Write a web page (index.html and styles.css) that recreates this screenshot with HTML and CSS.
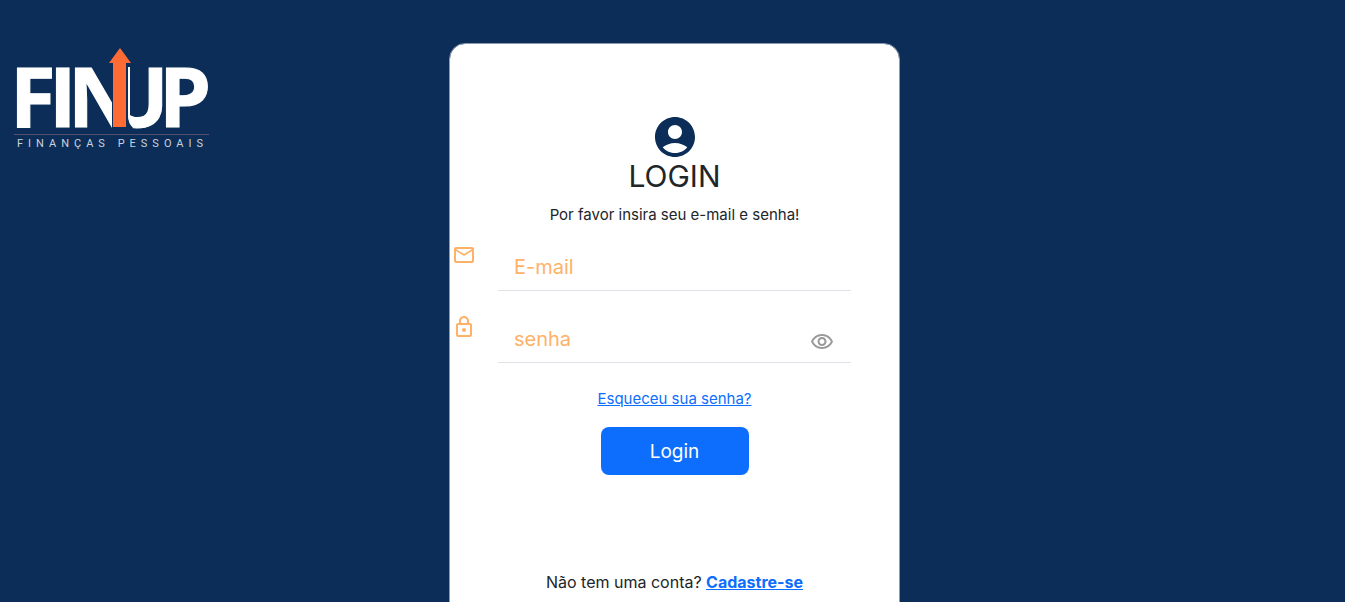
FILE: index.html
```html
<!DOCTYPE html>
<html lang="pt-BR">
<head>
<meta charset="utf-8">
<meta name="viewport" content="width=device-width, initial-scale=1">
<title>Finup - Login</title>
<link rel="stylesheet" href="styles.css">
</head>
<body>
<div class="page">
  <header class="brand">
    <svg class="brand-logo" viewBox="0 0 208 108" role="img" aria-label="Finup Finanças Pessoais">
      <text class="brand-name" x="-3 36 55 93 146" y="83">FINUP</text>
      <path class="brand-gap" d="M99 22h16v50q0 7 5 12l-2 1H99z"/>
      <path class="brand-edge" d="M115 23h2v48l2 10q-4-4-4-11z"/>
      <path class="brand-arrow" d="M107 4l11 15h-5v64h-13V19h-4z"/>
      <path class="brand-rule" d="M1 90.500h195"/>
      <text class="brand-tagline" x="4" y="103">FINANÇAS PESSOAIS</text>
    </svg>
  </header>
  <main class="card">
    <form class="login">
      <svg class="avatar" viewBox="0 0 24 24" aria-hidden="true"><path d="M12 2C6.480 2 2 6.480 2 12s4.480 10 10 10 10-4.480 10-10S17.520 2 12 2zm0 4c1.930 0 3.500 1.570 3.500 3.500S13.930 13 12 13s-3.500-1.570-3.500-3.500S10.070 6 12 6zm0 14c-2.030 0-4.430-.820-6.140-2.880C7.550 15.800 9.680 15 12 15s4.450.800 6.140 2.120C16.430 19.180 14.030 20 12 20z"/></svg>
      <h1 class="title">LOGIN</h1>
      <p class="intro">Por favor insira seu e-mail e senha!</p>
      <div class="field">
        <label class="field-icon" for="email" aria-label="E-mail">
          <svg viewBox="0 0 24 24" aria-hidden="true"><path d="M22 6c0-1.100-.900-2-2-2H4c-1.100 0-2 .900-2 2v12c0 1.100.900 2 2 2h16c1.100 0 2-.900 2-2V6zm-2 0l-8 5-8-5h16zm0 12H4V8l8 5 8-5v10z"/></svg>
        </label>
        <input class="field-input" id="email" type="email" placeholder="E-mail">
      </div>
      <div class="field">
        <label class="field-icon" for="senha" aria-label="senha">
          <svg viewBox="0 0 24 24" aria-hidden="true"><path d="M18 8h-1V6c0-2.760-2.240-5-5-5S7 3.240 7 6v2H6c-1.100 0-2 .900-2 2v10c0 1.100.900 2 2 2h12c1.100 0 2-.900 2-2V10c0-1.100-.900-2-2-2zM9 6c0-1.660 1.340-3 3-3s3 1.340 3 3v2H9V6zm9 14H6V10h12v10zm-6-3c1.100 0 2-.900 2-2s-.900-2-2-2-2 .900-2 2 .900 2 2 2z"/></svg>
        </label>
        <input class="field-input" id="senha" type="password" placeholder="senha">
        <button class="reveal" type="button" aria-label="Mostrar senha">
          <svg viewBox="0 0 24 24" aria-hidden="true"><path d="M12 6c3.790 0 7.170 2.130 8.820 5.500C19.170 14.870 15.790 17 12 17s-7.170-2.130-8.820-5.500C4.830 8.130 8.210 6 12 6m0-2C7 4 2.730 7.110 1 11.500 2.730 15.890 7 19 12 19s9.270-3.110 11-7.500C21.270 7.110 17 4 12 4zm0 5c1.380 0 2.500 1.120 2.500 2.500S13.380 14 12 14s-2.500-1.120-2.500-2.500S10.620 9 12 9m0-2c-2.480 0-4.500 2.020-4.500 4.500S9.520 16 12 16s4.500-2.020 4.500-4.500S14.480 7 12 7z"/></svg>
        </button>
      </div>
      <a class="forgot" href="#">Esqueceu sua senha?</a>
      <button class="submit" type="submit">Login</button>
    </form>
    <p class="signup">Não tem uma conta? <a href="#">Cadastre-se</a></p>
  </main>
</div>
</body>
</html>
```
FILE: styles.css
```css
* {
  box-sizing: border-box;
}

body {
  margin: 0;
  background: #0c2d57;
  color: #212529;
  font-family: Inter, "Liberation Sans", sans-serif;
  font-size: 16px;
  line-height: 24px;
}

.page {
  display: grid;
  grid-template-columns: 1fr minmax(320px, 451px) 1fr;
  align-items: start;
  padding: 43px 0 48px 4px;
}

.brand {
  padding: 1px 0 0 9px;
}

.brand-logo {
  display: block;
  width: 208px;
  height: 108px;
}

.brand-name {
  fill: #fff;
  stroke: #fff;
  stroke-width: 1;
  font-family: "Open Sans", sans-serif;
  font-size: 83px;
  font-weight: 700;
}

.brand-gap {
  fill: #0c2d57;
}

.brand-edge {
  fill: #fff;
}

.brand-arrow {
  fill: #ff6b35;
}

.brand-rule {
  stroke: #54506b;
  stroke-width: 1;
}

.brand-tagline {
  fill: #c9d3df;
  font-family: Roboto, sans-serif;
  font-size: 11px;
  letter-spacing: 5px;
}

.card {
  grid-column: 2;
  background: #fff;
  background-clip: padding-box;
  border: 1px solid #8b9aaf;
  border-radius: 16px;
  padding: 69px 0 48px;
}

.login {
  display: flex;
  flex-direction: column;
  align-items: center;
}

.avatar {
  width: 48px;
  height: 48px;
  fill: #0c2d57;
}

.title {
  margin: -4px 0 8px;
  font-size: 30px;
  line-height: 38px;
  font-weight: 400;
}

.intro {
  margin: 0 0 16px;
  font-size: 15px;
}

.field {
  display: flex;
  align-items: flex-start;
  align-self: stretch;
  gap: 22px;
  margin-bottom: 24px;
  padding: 0 48px 0 2px;
  position: relative;
}

.field-icon {
  width: 24px;
  height: 24px;
  fill: #ffb168;
}

.field-icon svg,
.reveal svg {
  display: block;
  width: 24px;
  height: 24px;
}

.field-input {
  flex: 1;
  min-width: 0;
  height: 48px;
  padding: 8px 48px 8px 16px;
  border: 0;
  border-bottom: 1px solid #dee2e6;
  background: transparent;
  color: #212529;
  font: inherit;
  font-size: 20px;
}

.field-input::placeholder {
  color: #ffb168;
  opacity: 1;
}

.reveal {
  position: absolute;
  top: 15px;
  right: 65px;
  padding: 0;
  border: 0;
  background: none;
  fill: #999;
  cursor: pointer;
}

a {
  color: #0d6efd;
}

.forgot {
  font-size: 15px;
}

.submit {
  margin-top: 16px;
  padding: 9px 48px 7px;
  min-width: 148px;
  border: 0;
  border-radius: 8px;
  background: #0d6efd;
  color: #fff;
  font: inherit;
  font-size: 19px;
  line-height: 32px;
  cursor: pointer;
}

.signup {
  margin: 95px 0 0;
  text-align: center;
}

.signup a {
  font-weight: 700;
}
```
